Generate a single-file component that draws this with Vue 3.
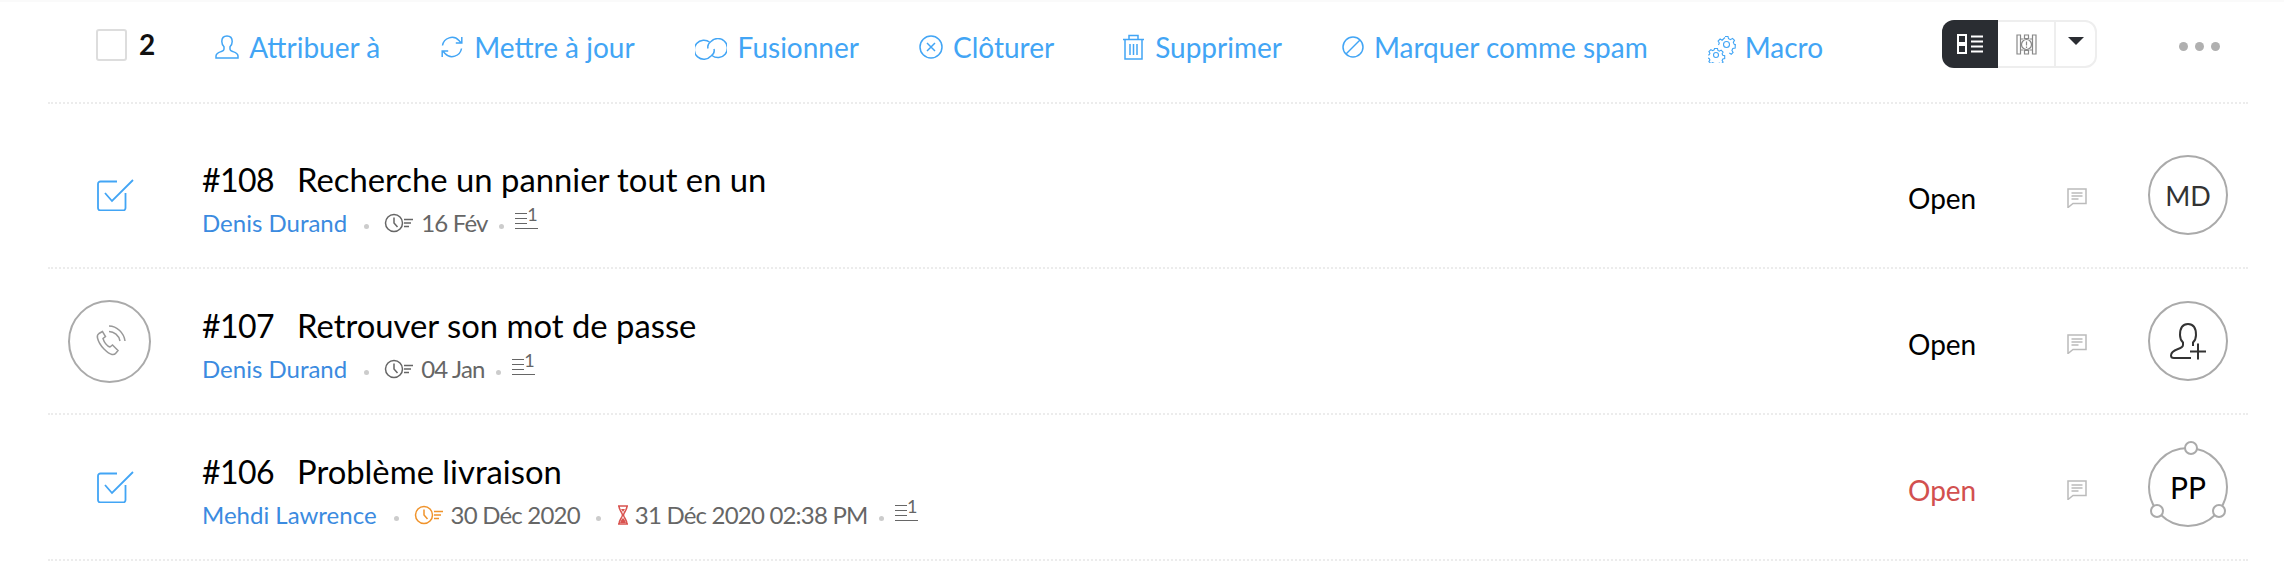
<script setup>
const rows = [
  { id: 108, title: 'Recherche un pannier tout en un', owner: 'Denis Durand', date: '16 Fév', kind: 'task', avatar: 'MD', first: true },
  { id: 107, title: 'Retrouver son mot de passe', owner: 'Denis Durand', date: '04 Jan', kind: 'call', avatar: 'add' },
  { id: 106, title: 'Problème livraison', owner: 'Mehdi Lawrence', date: '30 Déc 2020', due: '31 Déc 2020 02:38 PM', kind: 'task', avatar: 'PP', late: true },
]
</script>

<template>
  <div class="page">
    <header class="toolbar">
      <span class="check"></span>
      <b class="count">2</b>
      <nav class="actions">
        <a class="action">
          <svg width="24" height="24" viewBox="0 0 24 24"><path d="M12 1c-3.400 0-5.200 2.500-5.200 5.600 0 2.200.9 4 2.200 5.200v2.400c0 1-.7 1.600-2.600 2.300C3.500 17.600 1 18.400 1 21v2h22v-2c0-2.600-2.500-3.400-5.400-4.500-1.900-.7-2.600-1.300-2.600-2.300v-2.400c1.300-1.200 2.200-3 2.200-5.200C17.200 3.500 15.400 1 12 1z"/></svg>
          Attribuer à
        </a>
        <a class="action">
          <svg width="24" height="24" viewBox="0 0 24 24"><path d="M2.500 10.500A9.600 9.600 0 0 1 19 5.500l2 2.200M21.800 2v6h-6M21.500 13.500A9.600 9.600 0 0 1 5 18.500l-2-2.200M2.200 22v-6h6"/></svg>
          Mettre à jour
        </a>
        <a class="action">
          <svg class="link" width="32" height="22" viewBox="0 0 32 22"><path d="M15 4.500A9.500 9.500 0 1 0 16 18M17 17.500a9.500 9.500 0 1 0-1-14M16 3.500c-3 2-3.500 5-3 7M16 18c3-2 3.500-5 3-7"/></svg>
          Fusionner
        </a>
        <a class="action">
          <svg width="24" height="24" viewBox="0 0 24 24"><circle cx="12" cy="12" r="11"/><path d="M8 8l8 8M16 8l-8 8"/></svg>
          Clôturer
        </a>
        <a class="action trash">
          <svg width="23" height="26" viewBox="0 0 23 26"><path d="M1 5.500h21M3 5.500V25h17V5.500M7 5.500V1.500h9v4M8 10v11M11.500 10v11M15 10v11"/></svg>
          Supprimer
        </a>
        <a class="action">
          <svg width="22" height="22" viewBox="0 0 22 22"><circle cx="11" cy="11" r="10"/><path d="M4 18L18 4"/></svg>
          Marquer comme spam
        </a>
        <a class="action">
          <svg class="gears" width="28" height="28" viewBox="0 0 28 28"><circle cx="18.500" cy="9.500" r="3"/><path d="M17 1.500h3l.5 2.200 2 .9 2-1.200 2 2-1.200 2 .9 2 2 .5"/><path d="M27.200 10v3l-2.400.5-.9 2 1.200 2-1.800 1.700-2-1.200"/><path d="M10.500 10l.8-2-1.200-2 2-2 2 1.200 2.900-2.700"/><circle cx="8" cy="20" r="2.500"/><path d="M6.500 13.500h3l.4 1.900 1.500.7 1.700-1 2 2-1 1.700.7 1.500 1.900.4v2.800l-1.900.4-.7 1.500 1 1.700-2 2-1.700-1-1.500.7-.4 1.300h-3l-.4-1.800-1.500-.7-1.700 1-2-2 1-1.700-.7-1.500-1.900-.4v-2.800l1.900-.4.7-1.500-1-1.700 2-2 1.700 1 1.500-.7z"/></svg>
          Macro
        </a>
      </nav>
      <div class="views">
        <span class="view on">
          <svg width="26" height="20" viewBox="0 0 26 20"><path d="M1 1h8v8H1zM1 11h8v8H1zM14 2.500h12M14 7.500h12M14 12.500h12M14 17.500h12"/></svg>
        </span>
        <span class="view">
          <svg width="21" height="21" viewBox="0 0 21 21"><path d="M1 1h3.500v19H1zM16.500 1H20v19h-3.500zM4.500 5h3M13.500 5h3M4.500 16h3M13.500 16h3M8.500 1h4v3.500h-4zM8.500 16.500h4V20h-4z"/><circle cx="10.500" cy="10.500" r="5"/><path d="M10.500 7.500v4M10.500 12.500v1.500"/></svg>
        </span>
        <span class="view caret"><i></i></span>
      </div>
      <div class="more"><i></i><i></i><i></i></div>
    </header>

    <article v-for="row in rows" :key="row.id" class="row" :class="{ first: row.first }">
      <div class="lead">
        <svg v-if="row.kind === 'task'" class="task" width="37" height="32" viewBox="0 0 37 32">
          <path d="M20 2.500H3.500A2.500 2.500 0 0 0 1 5v24a2.500 2.500 0 0 0 2.500 2.500H26a2.500 2.500 0 0 0 2.500-2.500V14"/>
          <path d="M8 14l7 8L36 1"/>
        </svg>
        <span v-else class="circle call">
          <svg width="32" height="32" viewBox="0 0 32 32">
            <path d="M8.500 6.500L5 8.500c-1.500 1-2 2.500-1.500 4.500 1 4 3.500 8 6.500 11 3 3 5.500 5 8 5.500 1.500.3 3-.3 4-1.500l2-2.500-5.500-5.500-2.500 2c-3-1-6-5-7-8.500l2.500-2z"/>
            <path d="M15 1c8 0 15 7 16 15M15 6.500c5 0 10 4 11 9.500"/>
          </svg>
        </span>
      </div>
      <div class="body">
        <h2 class="title"><span class="num">#{{ row.id }}</span>{{ row.title }}</h2>
        <div class="meta">
          <a class="owner">{{ row.owner }}</a>
          <i class="dot"></i>
          <svg class="clock" :class="{ warn: row.late }" width="29" height="20" viewBox="0 0 29 20">
            <circle cx="10" cy="10" r="8.500"/><path d="M10 4.500V10l3.500 4M20 6.500h9M20 10h7M20 13.500h5"/>
          </svg>
          <span class="date">{{ row.date }}</span>
          <template v-if="row.due">
            <i class="dot"></i>
            <svg class="hourglass" width="12" height="20" viewBox="0 0 12 20">
              <path d="M1 1h10M1 19h10M2 1c0 4 3 6 3.500 9C5 13 2 15 2 19M10 1c0 4-3 6-3.500 9 .5 3 3.500 5 3.500 9"/><path class="sand" d="M3 18c1-3 2-4 3-5 1 1 2 2 3 5zM4 4h4L6 7z"/>
            </svg>
            <span class="date">{{ row.due }}</span>
          </template>
          <i class="dot short"></i>
          <span class="threads">
            <svg width="23" height="16" viewBox="0 0 23 16"><path d="M0 .5h12M0 5.500h12M0 10.500h12M0 15.500h23"/></svg>
            <sup>1</sup>
          </span>
        </div>
      </div>
      <span class="status" :class="{ late: row.late }">Open</span>
      <svg class="comment" width="20" height="20" viewBox="0 0 20 20">
        <path d="M1 1h18v14.500H6L1 19.500zM4.500 5h11M4.500 8h11M4.500 11h7"/>
      </svg>
      <span class="circle avatar" :class="{ pending: row.avatar === 'PP' }">
        <svg v-if="row.avatar === 'add'" class="add" width="37" height="37" viewBox="0 0 37 37">
          <path d="M21 35H4c-2 0-3-1-3-2.500 0-3 2.500-5 7-6.500 3-1 5-2 5-4v-2.500c-2-2-3-4.500-3-7.500C10 5 13 1 18 1s8 4 8 11c0 3-1 5.500-3 7.500V23"/>
          <path d="M20 28.500h16M28 20.500v16"/>
        </svg>
        <template v-else>{{ row.avatar }}</template>
        <template v-if="row.avatar === 'PP'">
          <i class="node top"></i><i class="node left"></i><i class="node right"></i>
        </template>
      </span>
    </article>
  </div>
</template>

<style scoped>
.page {
  width: 2284px;
  height: 572px;
  box-sizing: border-box;
  padding: 0 36px 0 48px;
  background: #fff;
  box-shadow: inset 0 2px 0 #fafafa;
  font-family: Lato, "Open Sans", sans-serif;
  overflow: hidden;
}
.toolbar {
  display: flex;
  align-items: center;
  height: 88px;
  padding-bottom: 14px;
  border-bottom: 2px dotted #ececec;
}
.check {
  width: 27px;
  height: 28px;
  margin-left: 48px;
  margin-top: 1px;
  border: 2px solid #ddd;
  border-radius: 3px;
}
.count {
  margin-left: 12px;
  font-size: 28px;
  font-weight: 700;
  color: #111;
}
.actions {
  display: flex;
  align-items: center;
  gap: 60px;
  margin-left: 60px;
  margin-top: 5px;
}
.action {
  display: flex;
  align-items: center;
  gap: 10px;
  font-size: 28px;
  color: #42a5f5;
  white-space: nowrap;
}
.action svg {
  fill: none;
  stroke: #42a5f5;
  stroke-width: 1.5;
}
.action .gears {
  margin-top: 4px;
  margin-right: -1px;
  stroke-width: 1.100;
}
.action .link {
  margin-top: 4px;
  margin-right: 1px;
}
.action.trash {
  margin-left: 8px;
}
.views {
  display: flex;
  height: 48px;
  margin-left: auto;
  box-sizing: border-box;
  border: 2px solid #eee;
  border-radius: 12px;
}
.view {
  display: flex;
  align-items: center;
  justify-content: center;
  width: 56px;
}
.view svg {
  fill: none;
  stroke: #888;
  stroke-width: 1.2;
}
.view.on {
  margin: -2px 0 -2px -2px;
  background: #2a2d32;
  border-radius: 12px 0 0 12px;
}
.view.on svg {
  stroke: #fff;
  stroke-width: 2;
}
.caret {
  border-left: 2px solid #eee;
  width: 41px;
  box-sizing: border-box;
}
.caret i {
  margin-top: -6px;
  border: 8px solid transparent;
  border-top-color: #2a2d32;
  border-bottom: 0;
}
.more {
  display: flex;
  gap: 7px;
  margin-left: 82px;
  margin-right: 28px;
  margin-top: 4px;
}
.more i {
  width: 9px;
  height: 9px;
  border-radius: 50%;
  background: #b0b0b0;
}
.row {
  display: flex;
  align-items: center;
  height: 144px;
  border-bottom: 2px dotted #ececec;
}
.row.first {
  padding-top: 19px;
}
.lead {
  display: flex;
  align-items: center;
  width: 154px;
  padding-left: 20px;
  box-sizing: border-box;
}
.task {
  margin-left: 29px;
  fill: none;
  stroke: #42a5f5;
  stroke-width: 1.800;
}
.circle {
  display: flex;
  align-items: center;
  justify-content: center;
  box-sizing: border-box;
  border: 2px solid #aaa;
  border-radius: 50%;
}
.call {
  width: 83px;
  height: 83px;
}
.call svg {
  fill: none;
  stroke: #999;
  stroke-width: 1.500;
}
.body {
  flex: 1;
  padding-top: 13px;
}
.title {
  margin: 0;
  font-size: 32.800px;
  font-weight: 400;
  line-height: 42px;
  color: #000;
}
.num {
  display: inline-block;
  width: 95px;
  font-size: 32px;
  letter-spacing: -0.6px;
}
.meta {
  display: flex;
  align-items: center;
  height: 43px;
  font-size: 24px;
  color: #666;
}
.owner {
  color: #3b8be0;
}
.date {
  letter-spacing: -0.8px;
}
.dot {
  width: 5px;
  height: 5px;
  margin: 8px 15px 0 17px;
  border-radius: 50%;
  background: #ccc;
}
.date + .dot {
  margin-left: 16px;
  margin-right: 16px;
}
.dot.short,
.date + .dot.short {
  margin-left: 11px;
  margin-right: 11px;
}
.clock {
  margin-right: 8px;
  fill: none;
  stroke: #666;
  stroke-width: 1.500;
}
.clock.warn {
  stroke: #f0932b;
}
.hourglass {
  margin-right: 6px;
  fill: none;
  stroke: #d9534f;
  stroke-width: 1.500;
}
.hourglass .sand {
  fill: #d9534f;
  stroke: none;
}
.threads {
  position: relative;
  display: block;
  width: 23px;
  height: 16px;
  margin-top: -3px;
}
.threads svg {
  display: block;
  fill: none;
  stroke: #666;
  stroke-width: 1.200;
}
.threads sup {
  position: absolute;
  right: 0;
  top: -7px;
  font-size: 18px;
  line-height: 17px;
}
.status {
  width: 159px;
  margin-top: 6px;
  font-size: 28px;
  color: #000;
}
.status.late {
  color: #d2504f;
}
.comment {
  margin-top: 6px;
  fill: none;
  stroke: #bbb;
  stroke-width: 1.500;
}
.avatar {
  position: relative;
  width: 80px;
  height: 80px;
  margin-left: 61px;
  margin-right: 20px;
  font-size: 27px;
  color: #333;
}
.avatar.pending {
  color: #000;
  font-size: 30px;
}
.add {
  fill: none;
  stroke: #333;
  stroke-width: 2;
}
.node {
  position: absolute;
  width: 14px;
  height: 14px;
  box-sizing: border-box;
  border: 2px solid #aaa;
  border-radius: 50%;
  background: #fff;
}
.node.top { top: -8px; left: 34px; }
.node.left { bottom: 7px; left: 0; }
.node.right { bottom: 7px; right: 0; }
</style>
